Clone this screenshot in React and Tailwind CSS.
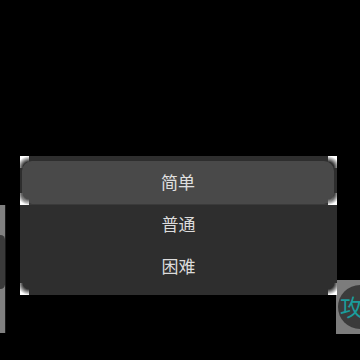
export default function App() {
  const font = { fontFamily: '"Noto Sans CJK SC", "Noto Sans", sans-serif' };
  const tl = "bg-[radial-gradient(circle_at_100%_100%,transparent_40%,#ffffff_80%)]";
  const tr = "bg-[radial-gradient(circle_at_0%_100%,transparent_40%,#ffffff_80%)]";
  const bl = "bg-[radial-gradient(circle_at_100%_0%,transparent_40%,#ffffff_80%)]";
  const br = "bg-[radial-gradient(circle_at_0%_0%,transparent_40%,#ffffff_80%)]";
  return (
    <div className="relative w-[360px] h-[360px] bg-black overflow-hidden" style={font}>
      {/* background game elements */}
      <div className="absolute left-0 top-[205px] w-[6px] h-[128px] bg-[#808080] border-r border-[#1a1a1a] overflow-hidden">
        <div className="absolute left-[-4px] top-[30px] w-[9px] h-[54px] rounded-full bg-[#3a3a3a]" />
      </div>
      <div className="absolute left-[336px] top-[280px] w-[24px] h-[54px] bg-[#7c7c7c] overflow-hidden">
        <div className="absolute left-[2px] top-[5px] w-[44px] h-[44px] rounded-full bg-[#3b3b3b]" />
        <span className="absolute left-[4px] top-[13px] text-[23px] leading-[26px] text-[#1a9c9c]">攻</span>
      </div>

      {/* dialog */}
      <div className="relative ml-[20px] mt-[156px] w-[317px] h-[139px] bg-[#2e2e2e] flex flex-col pt-[5px] pb-[7px]">
        <div className="mx-[2px] mr-[3px] h-[43px] rounded-[10px] bg-[#494949] flex items-center justify-center text-[17px] text-[#e0e0e0] pb-[2px]">
          简单
        </div>
        <div className="h-[1px] bg-[#3a3a3a]" />
        <div className="h-[41px] flex items-center justify-center text-[17px] text-[#dcdcdc] pb-[3px]">普通</div>
        <div className="h-[42px] flex items-center justify-center text-[17px] text-[#dcdcdc] pb-[2px]">困难</div>

        <div className={`absolute left-0 top-0 w-[9px] h-[12px] ${tl}`} />
        <div className={`absolute right-0 top-0 w-[9px] h-[12px] ${tr}`} />
        <div className={`absolute left-0 top-[37px] w-[9px] h-[12px] ${bl}`} />
        <div className={`absolute right-0 top-[37px] w-[9px] h-[12px] ${br}`} />
        <div className={`absolute left-0 bottom-0 w-[9px] h-[12px] ${bl}`} />
        <div className={`absolute right-0 bottom-0 w-[9px] h-[12px] ${br}`} />
      </div>
    </div>
  );
}
